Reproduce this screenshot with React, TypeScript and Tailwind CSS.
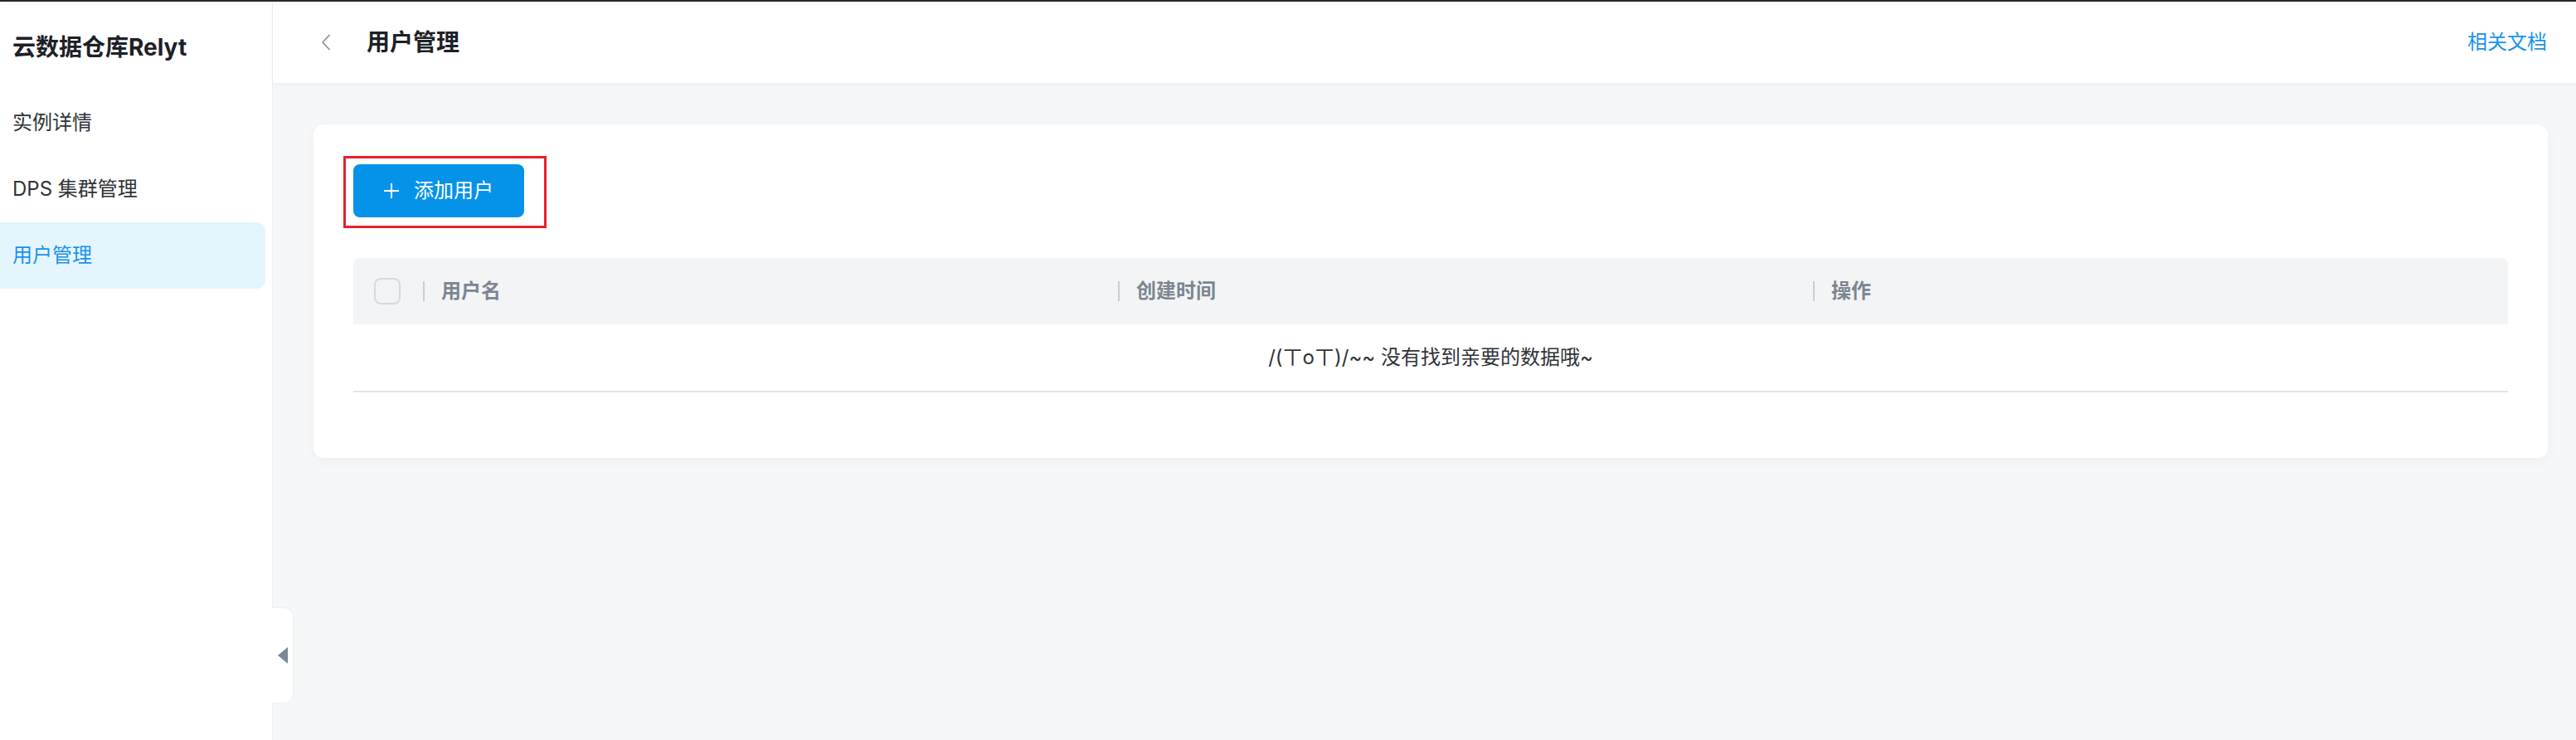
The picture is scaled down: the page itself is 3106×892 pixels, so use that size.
import React from 'react';

const menu = ['实例详情', 'DPS 集群管理', '用户管理'];
const columns = ['用户名', '创建时间', '操作'];

export default function App() {
    const active = '用户管理';

    return (
        <div className="relative flex h-[892px] w-full flex-col overflow-hidden bg-[#f6f7f9] font-['Inter','Noto_Sans_CJK_SC',sans-serif]">
            <div className="relative z-20 h-[2px] w-full bg-[#26282b] shadow-[0_2px_8px_rgba(0,0,0,0.10)]" />
            <div className="flex flex-1">
                {/* sidebar */}
                <aside className="flex w-[329px] flex-col border-r border-[#eceef1] bg-white">
                    <div className="flex h-[106px] items-center pl-[15px] pt-[4px] text-[28px] font-bold text-[#1d2126]">云数据仓库Relyt</div>
                    {menu.map((item) => (
                        <div
                            key={item}
                            className={
                                item === active
                                    ? 'mr-[8px] flex h-[80px] items-center rounded-r-[10px] bg-[#e5f5fd] pl-[15px] text-[24px] text-[#1893ec]'
                                    : 'flex h-[80px] items-center pl-[15px] text-[24px] text-[#2f3438]'
                            }
                        >
                            {item}
                        </div>
                    ))}
                </aside>

                <main className="flex flex-1 flex-col">
                    <header className="relative z-10 flex h-[98px] items-center bg-white pl-[58px] pr-[35px] shadow-[0_2px_6px_rgba(0,0,0,0.04)]">
                        <svg width="12" height="20" viewBox="0 0 12 20" fill="none" className="shrink-0">
                            <polyline points="10,1.5 2,10 10,18.5" stroke="#8a929a" strokeWidth="1.8" strokeLinecap="round" strokeLinejoin="round" />
                        </svg>
                        <h1 className="ml-[43px] text-[28px] font-bold text-[#1d2126]">用户管理</h1>
                        <a className="ml-auto text-[24px] text-[#1a93ea]">相关文档</a>
                    </header>

                    <div className="flex-1 pl-[49px] pr-[34px] pt-[50px]">
                        <section className="rounded-[12px] bg-white px-[48px] pb-[79px] pt-[48px] shadow-[0_4px_16px_rgba(0,0,0,0.04)]">
                            <div className="relative w-fit">
                                <button className="flex h-[64px] w-[206px] items-center justify-center gap-[18px] rounded-[8px] bg-[#0593e9] text-[24px] text-white">
                                    <svg width="18" height="18" viewBox="0 0 18 18" fill="none">
                                        <path d="M9 0v18M0 9h18" stroke="#fff" strokeWidth="2" />
                                    </svg>
                                    <span>添加用户</span>
                                </button>
                                <div className="pointer-events-none absolute -left-[12px] -top-[10px] h-[87px] w-[245px] border-[3px] border-[#e8202a]" />
                            </div>

                            <div className="mt-[49px]">
                                <div className="grid h-[80px] grid-cols-[84px_1fr_1fr_1fr] items-center rounded-t-[8px] bg-[#f3f4f6]">
                                    <div className="pl-[25px]">
                                        <div className="h-[32px] w-[32px] rounded-[8px] border-2 border-[#d5dade] bg-[#f1f3f5]" />
                                    </div>
                                    {columns.map((col) => (
                                        <div key={col} className="flex items-center">
                                            <span className="h-[24px] w-[2px] bg-[#c9ced3]" />
                                            <span className="ml-[20px] text-[24px] font-bold text-[#7c8690]">{col}</span>
                                        </div>
                                    ))}
                                </div>
                                <div className="flex h-[82px] items-center justify-center border-b-2 border-[#dfe4e9] text-[24px] text-[#2f3337]">
                                    /(ㄒoㄒ)/~~ 没有找到亲要的数据哦~
                                </div>
                            </div>
                        </section>
                    </div>
                </main>
            </div>

            {/* sidebar collapse handle */}
            <div className="absolute left-[328px] top-[732px] flex h-[116px] w-[26px] items-center justify-center rounded-r-[12px] border border-l-0 border-[#eef0f2] bg-white">
                <svg width="12" height="20" viewBox="0 0 12 20">
                    <polygon points="12,0 12,20 0,10" fill="#7d8791" />
                </svg>
            </div>
        </div>
    );
}
